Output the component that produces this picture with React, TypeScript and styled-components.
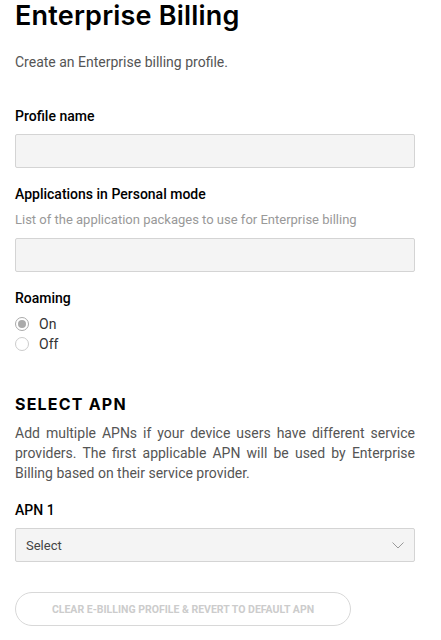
import React from "react";
import styled, { createGlobalStyle } from "styled-components";

const Global = createGlobalStyle`
  html, body { margin: 0; padding: 0; background: #fff; }
  body { font-family: Roboto, "Noto Sans", sans-serif; color: #000; }
  * { box-sizing: border-box; }
`;

const Page = styled.div`
  width: 441px;
  padding: 0 26px 0 15px;
  display: flex;
  flex-direction: column;
`;

const Title = styled.h1`
  margin: 0;
  font-family: Inter, sans-serif;
  font-weight: 600;
  font-size: 27px;
  line-height: 32px;
  letter-spacing: 0.2px;
  color: #000;
`;

const Intro = styled.p`
  margin: 20px 0 0;
  font-size: 14px;
  line-height: 20px;
  color: #555;
`;

const Field = styled.div<{ $top: number }>`
  display: flex;
  flex-direction: column;
  margin-top: ${(p) => p.$top}px;
`;

const Label = styled.div`
  font-size: 14px;
  font-weight: 500;
  line-height: 20px;
  color: #000;
`;

const Hint = styled.div`
  font-size: 13px;
  line-height: 18px;
  color: #999;
  margin-top: 7px;
`;

const Input = styled.div<{ $top: number }>`
  height: 34px;
  width: 400px;
  margin-top: ${(p) => p.$top}px;
  background: #f4f4f4;
  border: 1px solid #d4d4d4;
  border-radius: 2px;
`;

const RadioGroup = styled.div`
  display: flex;
  flex-direction: column;
  margin-top: 6px;
`;

const RadioRow = styled.label`
  display: flex;
  align-items: center;
  height: 20px;
  gap: 10px;
  font-size: 14px;
  color: #333;
`;

const RadioDot = styled.span<{ $on?: boolean }>`
  width: 14px;
  height: 14px;
  border-radius: 50%;
  border: 1px solid ${(p) => (p.$on ? "#aaa" : "#ccc")};
  display: flex;
  align-items: center;
  justify-content: center;
  background: #fff;
  &::after {
    content: "";
    width: 8px;
    height: 8px;
    border-radius: 50%;
    background: ${(p) => (p.$on ? "#aaa" : "transparent")};
  }
`;

const SectionTitle = styled.h2`
  margin: 40px 0 0;
  font-family: Inter, sans-serif;
  font-weight: 700;
  font-size: 16px;
  line-height: 20px;
  letter-spacing: 1.2px;
  color: #000;
`;

const Para = styled.p`
  margin: 9px 0 0;
  font-size: 14px;
  line-height: 20px;
  color: #555;
  text-align: justify;
`;

const Select = styled.div`
  height: 34px;
  width: 400px;
  margin-top: 8px;
  background: #f4f4f4;
  border: 1px solid #d4d4d4;
  border-radius: 2px;
  display: flex;
  align-items: center;
  justify-content: space-between;
  padding: 0 10px 0 10px;
  font-size: 13px;
  color: #444;
`;

const Button = styled.button`
  margin-top: 30px;
  width: 336px;
  height: 34px;
  border-radius: 17px;
  border: 1px solid #d8d8d8;
  background: #fff;
  font-family: Roboto, sans-serif;
  font-weight: 700;
  font-size: 10.5px;
  color: #ccc;
  text-transform: uppercase;
  padding: 0;
  align-self: flex-start;
`;

export default function App() {
  return (
    <Page>
      <Global />
      <Title>Enterprise Billing</Title>
      <Intro>Create an Enterprise billing profile.</Intro>
      <Field $top={34}>
        <Label>Profile name</Label>
        <Input $top={8} />
      </Field>
      <Field $top={16}>
        <Label>Applications in Personal mode</Label>
        <Hint>List of the application packages to use for Enterprise billing</Hint>
        <Input $top={9} />
      </Field>
      <Field $top={16}>
        <Label>Roaming</Label>
        <RadioGroup>
          <RadioRow>
            <RadioDot $on />
            On
          </RadioRow>
          <RadioRow>
            <RadioDot />
            Off
          </RadioRow>
        </RadioGroup>
      </Field>
      <SectionTitle>SELECT APN</SectionTitle>
      <Para>
        Add multiple APNs if your device users have different service providers. The first
        applicable APN will be used by Enterprise Billing based on their service provider.
      </Para>
      <Field $top={17}>
        <Label>APN 1</Label>
        <Select>
          <span>Select</span>
          <svg width="12" height="7" viewBox="0 0 12 7" fill="none">
            <path d="M0.5 0.5l5.5 5.5 5.5-5.5" stroke="#999" strokeWidth="1" />
          </svg>
        </Select>
      </Field>
      <Button>Clear E-Billing Profile &amp; Revert to Default APN</Button>
    </Page>
  );
}
